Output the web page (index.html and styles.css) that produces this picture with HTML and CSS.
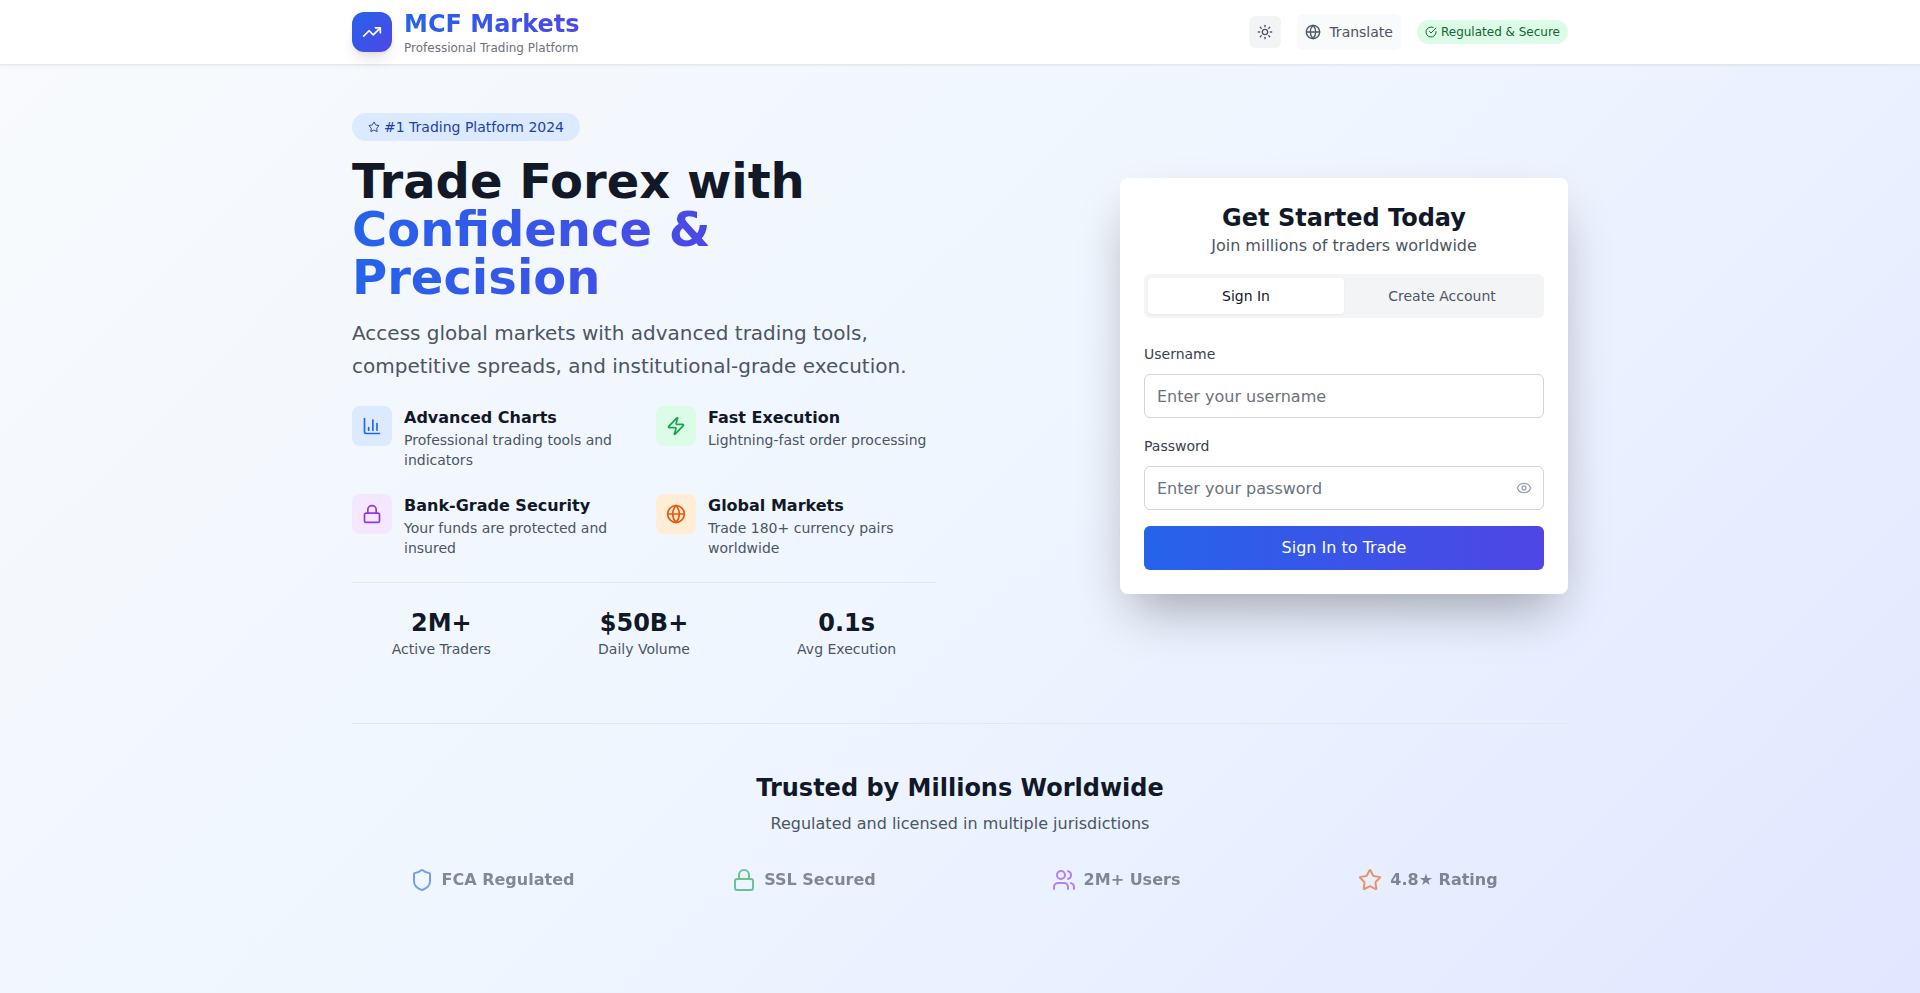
FILE: index.html
```html
<!DOCTYPE html>
<html lang="en">
<head>
    <meta charset="UTF-8">
    <meta name="viewport" content="width=device-width, initial-scale=1.0">
    <title>MCF Markets - Professional Trading Platform</title>
    <link rel="stylesheet" href="styles.css">
</head>
<body>
    <header class="site-header">
        <div class="wrap header-row">
            <div class="brand">
                <div class="brand-logo">
                    <svg class="icon icon-20" viewBox="0 0 24 24"><polyline points="22 7 13.5 15.5 8.5 10.5 2 17"/><polyline points="16 7 22 7 22 13"/></svg>
                </div>
                <div>
                    <div class="brand-name">MCF Markets</div>
                    <div class="brand-sub">Professional Trading Platform</div>
                </div>
            </div>
            <div class="header-actions">
                <button class="theme-btn" type="button">
                    <svg class="icon icon-16" viewBox="0 0 24 24"><circle cx="12" cy="12" r="4"/><path d="M12 2v2"/><path d="M12 20v2"/><path d="m4.93 4.93 1.41 1.41"/><path d="m17.66 17.66 1.41 1.41"/><path d="M2 12h2"/><path d="M20 12h2"/><path d="m6.34 17.66-1.41 1.41"/><path d="m19.07 4.93-1.41 1.41"/></svg>
                </button>
                <button class="translate-btn" type="button">
                    <svg class="icon icon-16" viewBox="0 0 24 24"><circle cx="12" cy="12" r="10"/><path d="M12 2a14.5 14.5 0 0 0 0 20 14.5 14.5 0 0 0 0-20"/><path d="M2 12h20"/></svg>
                    Translate
                </button>
                <span class="secure-badge">
                    <svg class="icon icon-12" viewBox="0 0 24 24"><path d="M22 11.08V12a10 10 0 1 1-5.93-9.14"/><polyline points="22 4 12 14.01 9 11.01"/></svg>
                    Regulated &amp; Secure
                </span>
            </div>
        </div>
    </header>

    <main class="wrap">
        <section class="hero">
            <div class="hero-left">
                <span class="hero-badge">
                    <svg class="icon icon-12" viewBox="0 0 24 24"><path d="M11.525 2.295a.53.53 0 0 1 .95 0l2.31 4.679a2.123 2.123 0 0 0 1.595 1.16l5.166.756a.53.53 0 0 1 .294.904l-3.736 3.638a2.123 2.123 0 0 0-.611 1.878l.882 5.14a.53.53 0 0 1-.771.56l-4.618-2.428a2.122 2.122 0 0 0-1.973 0L6.396 21.01a.53.53 0 0 1-.77-.56l.881-5.139a2.122 2.122 0 0 0-.611-1.879L2.16 9.795a.53.53 0 0 1 .294-.906l5.165-.755a2.122 2.122 0 0 0 1.597-1.16z"/></svg>
                    #1 Trading Platform 2024
                </span>
                <h1>Trade Forex with <span class="accent">Confidence &amp; Precision</span></h1>
                <p class="lead">Access global markets with advanced trading tools, competitive spreads, and institutional-grade execution.</p>

                <div class="features">
                    <div class="feature">
                        <div class="feature-icon blue">
                            <svg class="icon icon-20" viewBox="0 0 24 24"><path d="M3 3v16a2 2 0 0 0 2 2h16"/><path d="M18 17V9"/><path d="M13 17V5"/><path d="M8 17v-3"/></svg>
                        </div>
                        <div>
                            <h3>Advanced Charts</h3>
                            <p>Professional trading tools and indicators</p>
                        </div>
                    </div>
                    <div class="feature">
                        <div class="feature-icon green">
                            <svg class="icon icon-20" viewBox="0 0 24 24"><path d="M4 14a1 1 0 0 1-.78-1.63l9.9-10.2a.5.5 0 0 1 .86.46l-1.92 6.02A1 1 0 0 0 13 10h7a1 1 0 0 1 .78 1.63l-9.9 10.2a.5.5 0 0 1-.86-.46l1.92-6.02A1 1 0 0 0 11 14z"/></svg>
                        </div>
                        <div>
                            <h3>Fast Execution</h3>
                            <p>Lightning-fast order processing</p>
                        </div>
                    </div>
                    <div class="feature">
                        <div class="feature-icon purple">
                            <svg class="icon icon-20" viewBox="0 0 24 24"><rect x="3" y="11" width="18" height="11" rx="2" ry="2"/><path d="M7 11V7a5 5 0 0 1 10 0v4"/></svg>
                        </div>
                        <div>
                            <h3>Bank-Grade Security</h3>
                            <p>Your funds are protected and insured</p>
                        </div>
                    </div>
                    <div class="feature">
                        <div class="feature-icon orange">
                            <svg class="icon icon-20" viewBox="0 0 24 24"><circle cx="12" cy="12" r="10"/><path d="M12 2a14.5 14.5 0 0 0 0 20 14.5 14.5 0 0 0 0-20"/><path d="M2 12h20"/></svg>
                        </div>
                        <div>
                            <h3>Global Markets</h3>
                            <p>Trade 180+ currency pairs worldwide</p>
                        </div>
                    </div>
                </div>

                <div class="stats">
                    <div class="stat"><div class="stat-num">2M+</div><div class="stat-label">Active Traders</div></div>
                    <div class="stat"><div class="stat-num">$50B+</div><div class="stat-label">Daily Volume</div></div>
                    <div class="stat"><div class="stat-num">0.1s</div><div class="stat-label">Avg Execution</div></div>
                </div>
            </div>

            <div class="hero-right">
                <div class="auth-card">
                    <h2>Get Started Today</h2>
                    <p class="auth-sub">Join millions of traders worldwide</p>

                    <div class="tabs">
                        <button class="tab active" type="button">Sign In</button>
                        <button class="tab" type="button">Create Account</button>
                    </div>

                    <form>
                        <div class="field">
                            <label for="username">Username</label>
                            <input type="text" id="username" placeholder="Enter your username">
                        </div>
                        <div class="field">
                            <label for="password">Password</label>
                            <div class="password-box">
                                <input type="password" id="password" placeholder="Enter your password">
                                <svg class="icon icon-16 eye" viewBox="0 0 24 24"><path d="M2.062 12.348a1 1 0 0 1 0-.696 10.75 10.75 0 0 1 19.876 0 1 1 0 0 1 0 .696 10.75 10.75 0 0 1-19.876 0"/><circle cx="12" cy="12" r="3"/></svg>
                            </div>
                        </div>
                        <button class="submit-btn" type="submit">Sign In to Trade</button>
                    </form>
                </div>
            </div>
        </section>

        <section class="trust">
            <h2>Trusted by Millions Worldwide</h2>
            <p>Regulated and licensed in multiple jurisdictions</p>
            <div class="trust-row">
                <div class="trust-item">
                    <svg class="icon icon-24 t-blue" viewBox="0 0 24 24"><path d="M20 13c0 5-3.5 7.5-7.66 8.95a1 1 0 0 1-.67-.01C7.5 20.5 4 18 4 13V6a1 1 0 0 1 1-1c2 0 4.5-1.2 6.24-2.72a1.17 1.17 0 0 1 1.52 0C14.51 3.81 17 5 19 5a1 1 0 0 1 1 1z"/></svg>
                    FCA Regulated
                </div>
                <div class="trust-item">
                    <svg class="icon icon-24 t-green" viewBox="0 0 24 24"><rect x="3" y="11" width="18" height="11" rx="2" ry="2"/><path d="M7 11V7a5 5 0 0 1 10 0v4"/></svg>
                    SSL Secured
                </div>
                <div class="trust-item">
                    <svg class="icon icon-24 t-purple" viewBox="0 0 24 24"><path d="M16 21v-2a4 4 0 0 0-4-4H6a4 4 0 0 0-4 4v2"/><circle cx="9" cy="7" r="4"/><path d="M22 21v-2a4 4 0 0 0-3-3.87"/><path d="M16 3.13a4 4 0 0 1 0 7.75"/></svg>
                    2M+ Users
                </div>
                <div class="trust-item">
                    <svg class="icon icon-24 t-orange" viewBox="0 0 24 24"><path d="M11.525 2.295a.53.53 0 0 1 .95 0l2.31 4.679a2.123 2.123 0 0 0 1.595 1.16l5.166.756a.53.53 0 0 1 .294.904l-3.736 3.638a2.123 2.123 0 0 0-.611 1.878l.882 5.14a.53.53 0 0 1-.771.56l-4.618-2.428a2.122 2.122 0 0 0-1.973 0L6.396 21.01a.53.53 0 0 1-.77-.56l.881-5.139a2.122 2.122 0 0 0-.611-1.879L2.16 9.795a.53.53 0 0 1 .294-.906l5.165-.755a2.122 2.122 0 0 0 1.597-1.16z"/></svg>
                    4.8★ Rating
                </div>
            </div>
        </section>
    </main>
</body>
</html>
```

FILE: styles.css
```css
* { box-sizing: border-box; }
html, body { margin: 0; padding: 0; }
body {
    min-height: 100vh;
    font-family: "DejaVu Sans", sans-serif;
    color: #111827;
    background: linear-gradient(135deg, #f8fafc 0%, #eff6ff 50%, #e0e7ff 100%);
}
h1, h2, h3, p { margin: 0; }
button, input { font-family: inherit; }

.wrap { width: 1280px; margin: 0 auto; padding: 0 32px; }

.icon { fill: none; stroke: currentColor; stroke-width: 2; stroke-linecap: round; stroke-linejoin: round; flex-shrink: 0; }
.icon-12 { width: 12px; height: 12px; }
.icon-16 { width: 16px; height: 16px; }
.icon-20 { width: 20px; height: 20px; }
.icon-24 { width: 24px; height: 24px; }

/* header */
.site-header { height: 65px; background: #fff; border-bottom: 1px solid #e5e7eb; box-shadow: 0 1px 2px rgba(0,0,0,.05); }
.header-row { height: 64px; display: flex; align-items: center; justify-content: space-between; }
.brand { display: flex; align-items: center; gap: 12px; }
.brand-logo {
    width: 40px; height: 40px; border-radius: 12px; color: #fff;
    display: flex; align-items: center; justify-content: center;
    background: linear-gradient(135deg, #2563eb, #4f46e5);
    box-shadow: 0 10px 15px -3px rgba(0,0,0,.1), 0 4px 6px -4px rgba(0,0,0,.1);
}
.brand-name {
    font-size: 24px; line-height: 32px; font-weight: 700;
    background: linear-gradient(90deg, #2563eb, #4f46e5);
    -webkit-background-clip: text; background-clip: text; color: transparent;
}
.brand-sub { font-size: 12px; line-height: 16px; color: #6b7280; }
.header-actions { display: flex; align-items: center; gap: 16px; }
.theme-btn { width: 32px; height: 32px; padding: 8px; border: 0; border-radius: 6px; background: #f3f4f6; color: #4b5563; display: flex; }
.translate-btn {
    height: 36px; padding: 0 8px; border: 0; border-radius: 6px; background: #f9fafb; color: #4b5563;
    font-size: 14px; line-height: 20px; display: flex; align-items: center; gap: 8px;
}
.secure-badge {
    height: 24px; padding: 0 8px; border-radius: 999px; background: #dcfce7; color: #166534;
    font-size: 12px; line-height: 16px; display: flex; align-items: center; gap: 4px;
}

/* hero */
.hero { display: grid; grid-template-columns: 1fr 1fr; gap: 48px; align-items: center; padding: 48px 0 64px; border-bottom: 1px solid #e5e7eb; }
.hero-badge {
    display: inline-flex; align-items: center; gap: 4px; height: 28px; padding: 0 16px; border-radius: 999px;
    background: #dbeafe; color: #1e40af; font-size: 14px; line-height: 20px;
}
h1 { margin-top: 16px; font-size: 48px; line-height: 48px; font-weight: 700; }
.accent { display: block; color: transparent; background: linear-gradient(90deg, #2563eb, #4f46e5 68%); -webkit-background-clip: text; background-clip: text; }
.lead { margin-top: 16px; font-size: 20px; line-height: 32.5px; color: #4b5563; }

.features { margin-top: 24px; display: grid; grid-template-columns: 1fr 1fr; gap: 24px; }
.feature { display: flex; gap: 12px; }
.feature-icon { width: 40px; height: 40px; border-radius: 8px; display: flex; align-items: center; justify-content: center; flex-shrink: 0; }
.feature-icon.blue { background: #dbeafe; color: #2563eb; }
.feature-icon.green { background: #dcfce7; color: #16a34a; }
.feature-icon.purple { background: #f3e8ff; color: #9333ea; }
.feature-icon.orange { background: #ffedd5; color: #ea580c; }
.feature h3 { font-size: 16px; line-height: 24px; font-weight: 700; }
.feature p { font-size: 14px; line-height: 20px; color: #4b5563; }

.stats { margin-top: 24px; padding-top: 24px; border-top: 1px solid #e5e7eb; display: grid; grid-template-columns: repeat(3, 1fr); gap: 24px; text-align: center; }
.stat-num { font-size: 24px; line-height: 32px; font-weight: 700; }
.stat-label { font-size: 14px; line-height: 20px; color: #4b5563; }

/* auth card */
.hero-right { display: flex; justify-content: flex-end; }
.auth-card {
    width: 448px; padding: 24px; border-radius: 8px; background: #fff;
    box-shadow: 0 25px 50px -12px rgba(0,0,0,.33);
}
.auth-card h2 { font-size: 24px; line-height: 32px; font-weight: 700; text-align: center; }
.auth-sub { font-size: 16px; line-height: 24px; color: #4b5563; text-align: center; }
.tabs { margin-top: 16px; height: 44px; padding: 4px; border-radius: 6px; background: #f3f4f6; display: grid; grid-template-columns: 1fr 1fr; }
.tab { border: 0; border-radius: 4px; background: transparent; color: #4b5563; font-size: 14px; line-height: 20px; }
.tab.active { background: #fff; color: #111827; box-shadow: 0 1px 2px rgba(0,0,0,.05); }

form { margin-top: 26px; }
.field { margin-bottom: 18px; }
.field:last-of-type { margin-bottom: 16px; }
label { display: block; margin-bottom: 10px; font-size: 14px; line-height: 20px; color: #374151; }
input { display: block; width: 100%; height: 44px; padding: 0 12px; border: 1px solid #d1d5db; border-radius: 6px; background: #fff; font-size: 16px; color: #111827; }
input::placeholder { color: #6b7280; opacity: 1; }
.password-box { position: relative; }
.eye { position: absolute; top: 14px; right: 12px; color: #9ca3af; }
.submit-btn { display: block; width: 100%; height: 44px; border: 0; border-radius: 6px; color: #fff; font-size: 16px; line-height: 24px; background: linear-gradient(90deg, #2563eb, #4f46e5); }

/* trust */
.trust { padding-top: 48px; text-align: center; }
.trust h2 { font-size: 24px; line-height: 32px; font-weight: 700; }
.trust p { margin-top: 8px; font-size: 16px; line-height: 24px; color: #4b5563; }
.trust-row { margin-top: 32px; display: grid; grid-template-columns: repeat(4, 1fr); gap: 32px; opacity: .6; }
.trust-item { display: flex; align-items: center; justify-content: center; gap: 8px; font-size: 16px; line-height: 24px; font-weight: 700; color: #374151; }
.t-blue { color: #2563eb; }
.t-green { color: #16a34a; }
.t-purple { color: #9333ea; }
.t-orange { color: #ea580c; }
```
